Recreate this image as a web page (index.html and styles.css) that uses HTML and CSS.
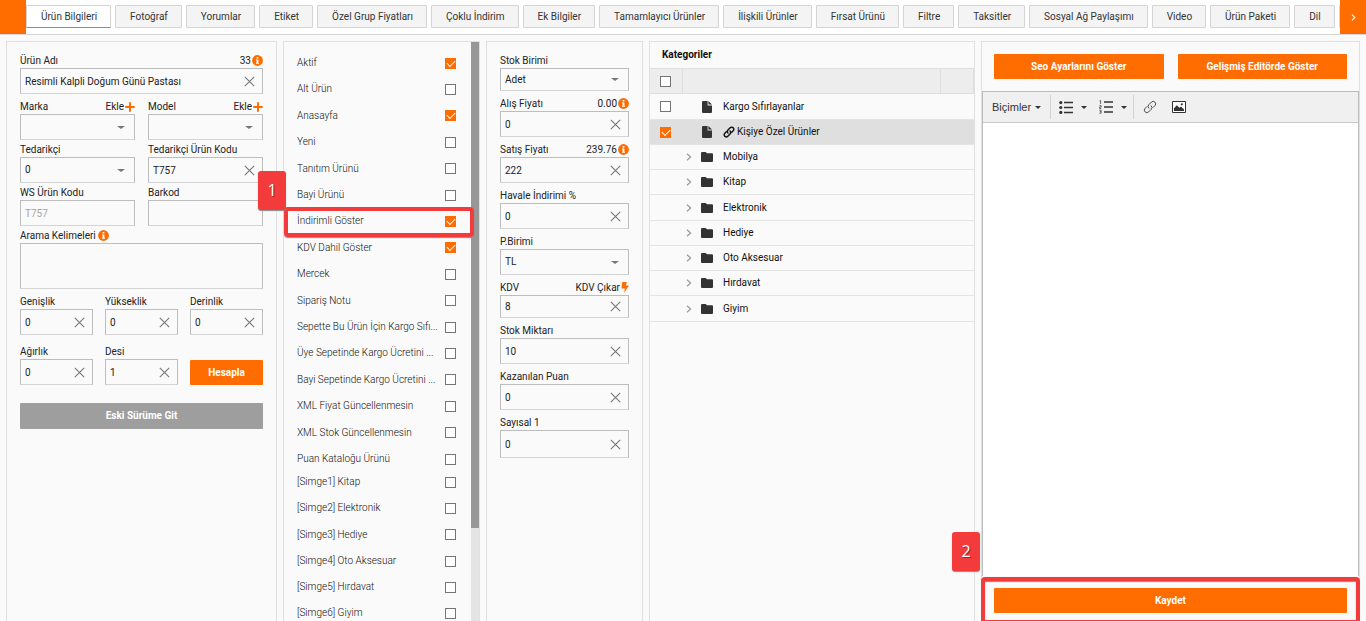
FILE: index.html
```html
<!DOCTYPE html>
<html lang="tr">
<head>
<meta charset="utf-8">
<title>Ürün Bilgileri</title>
<link rel="stylesheet" href="styles.css">
</head>
<body>
<svg class="sprite" width="0" height="0">
  <symbol id="x" viewBox="0 0 11 11"><path d="M.8.8l9.4 9.4M10.2.8L.8 10.2" fill="none" stroke="currentColor" stroke-width="1.1"/></symbol>
  <symbol id="info" viewBox="0 0 11 11"><circle cx="5.5" cy="5.5" r="5.4" fill="#ff6c00"/><path d="M4.6 2h1.8v1.5H4.6zM4 4.5h2.4v3.2H7v1H4v-1h.6V5.4H4z" fill="#fff"/></symbol>
  <symbol id="plus" viewBox="0 0 10 10"><path d="M5 .3v9.4M.3 5h9.4" stroke="#ff6c00" stroke-width="2"/></symbol>
  <symbol id="bolt" viewBox="0 0 8 11"><path d="M1.3 0h4.5L4.9 3.6H8L3 11l1-4.6H.4z" fill="#ff6c00"/></symbol>
  <symbol id="file" viewBox="0 0 10 12"><path d="M1 0h4.6v4.4H10V11a1 1 0 0 1-1 1H1a1 1 0 0 1-1-1V1a1 1 0 0 1 1-1zM6.4 0L10 3.6H6.4z" fill="#333"/></symbol>
  <symbol id="folder" viewBox="0 0 12 10"><path d="M1 0h3.6L6 1.2h5a1 1 0 0 1 1 1V9a1 1 0 0 1-1 1H1a1 1 0 0 1-1-1V1a1 1 0 0 1 1-1z" fill="#333"/></symbol>
  <symbol id="chev" viewBox="0 0 6 8"><path d="M1 .8L4.6 4 1 7.2" fill="none" stroke="#999" stroke-width="1.2"/></symbol>
  <symbol id="chain" viewBox="0 0 16 16"><g fill="none" stroke="currentColor" stroke-linecap="round"><path d="M6.6 9.4a2.8 2.8 0 0 1 0-4l3-3a2.8 2.8 0 0 1 4 4l-2 2"/><path d="M9.4 6.6a2.8 2.8 0 0 1 0 4l-3 3a2.8 2.8 0 0 1-4-4l2-2"/></g></symbol>
</svg>

<nav class="tabbar">
  <button class="tab-scroll tab-scroll-left" aria-label="Geri"></button>
  <div class="tabs">
    <button class="tab active">Ürün Bilgileri</button>
    <button class="tab">Fotoğraf</button>
    <button class="tab">Yorumlar</button>
    <button class="tab">Etiket</button>
    <button class="tab">Özel Grup Fiyatları</button>
    <button class="tab">Çoklu İndirim</button>
    <button class="tab">Ek Bilgiler</button>
    <button class="tab">Tamamlayıcı Ürünler</button>
    <button class="tab">İlişkili Ürünler</button>
    <button class="tab">Fırsat Ürünü</button>
    <button class="tab">Filtre</button>
    <button class="tab">Taksitler</button>
    <button class="tab">Sosyal Ağ Paylaşımı</button>
    <button class="tab">Video</button>
    <button class="tab">Ürün Paketi</button>
    <button class="tab">Dil</button>
    <button class="tab"></button>
  </div>
  <button class="tab-scroll" aria-label="İleri"><svg width="5" height="7" viewBox="0 0 5 7"><path d="M1 .7L3.8 3.5 1 6.3" fill="none" stroke="#fff" stroke-width="1.2"/></svg></button>
</nav>

<main class="columns">
  <section class="panel form">
    <div class="field">
      <div class="label"><label for="ad">Ürün Adı</label><span class="extra">33<svg class="i11"><use href="#info"/></svg></span></div>
      <div class="control"><input id="ad" value="Resimli Kalpli Doğum Günü Pastası"><button class="clear" aria-label="Temizle"><svg><use href="#x"/></svg></button></div>
    </div>
    <div class="stack">
      <div class="two">
        <div class="field">
          <div class="label"><label for="marka">Marka</label><span class="extra">Ekle<svg class="i10"><use href="#plus"/></svg></span></div>
          <div class="control drop"><select id="marka"><option></option></select></div>
        </div>
        <div class="field">
          <div class="label"><label for="model">Model</label><span class="extra">Ekle<svg class="i10"><use href="#plus"/></svg></span></div>
          <div class="control drop"><select id="model"><option></option></select></div>
        </div>
      </div>
      <div class="two">
        <div class="field">
          <div class="label"><label for="ted">Tedarikçi</label></div>
          <div class="control drop"><select id="ted"><option>0</option></select></div>
        </div>
        <div class="field">
          <div class="label"><label for="tedkod">Tedarikçi Ürün Kodu</label></div>
          <div class="control"><input id="tedkod" value="T757"><button class="clear" aria-label="Temizle"><svg><use href="#x"/></svg></button></div>
        </div>
      </div>
      <div class="two">
        <div class="field">
          <div class="label"><label for="ws">WS Ürün Kodu</label></div>
          <div class="control"><input id="ws" value="T757" disabled></div>
        </div>
        <div class="field">
          <div class="label"><label for="barkod">Barkod</label></div>
          <div class="control"><input id="barkod"></div>
        </div>
      </div>
      <div class="field">
        <div class="label start"><label for="arama">Arama Kelimeleri</label><svg class="i11"><use href="#info"/></svg></div>
        <textarea id="arama"></textarea>
      </div>
    </div>
    <div class="three">
      <div class="field">
        <div class="label"><label for="gen">Genişlik</label></div>
        <div class="control"><input id="gen" value="0"><button class="clear" aria-label="Temizle"><svg><use href="#x"/></svg></button></div>
      </div>
      <div class="field">
        <div class="label"><label for="yuk">Yükseklik</label></div>
        <div class="control"><input id="yuk" value="0"><button class="clear" aria-label="Temizle"><svg><use href="#x"/></svg></button></div>
      </div>
      <div class="field">
        <div class="label"><label for="der">Derinlik</label></div>
        <div class="control"><input id="der" value="0"><button class="clear" aria-label="Temizle"><svg><use href="#x"/></svg></button></div>
      </div>
      <div class="field">
        <div class="label"><label for="agir">Ağırlık</label></div>
        <div class="control"><input id="agir" value="0"><button class="clear" aria-label="Temizle"><svg><use href="#x"/></svg></button></div>
      </div>
      <div class="field">
        <div class="label"><label for="desi">Desi</label></div>
        <div class="control"><input id="desi" value="1"><button class="clear" aria-label="Temizle"><svg><use href="#x"/></svg></button></div>
      </div>
      <button class="btn calc">Hesapla</button>
    </div>
    <button class="btn grey">Eski Sürüme Git</button>
  </section>

  <section class="panel flags">
    <div class="flag-lists">
      <div class="flag-list">
        <label class="flag"><span>Aktif</span><input type="checkbox" checked></label>
        <label class="flag"><span>Alt Ürün</span><input type="checkbox"></label>
        <label class="flag"><span>Anasayfa</span><input type="checkbox" checked></label>
        <label class="flag"><span>Yeni</span><input type="checkbox"></label>
        <label class="flag"><span>Tanıtım Ürünü</span><input type="checkbox"></label>
        <label class="flag"><span>Bayi Ürünü</span><input type="checkbox"></label>
        <label class="flag marked"><span>İndirimli Göster</span><input type="checkbox" checked><i class="frame"></i><b class="badge badge-one">1</b></label>
        <label class="flag"><span>KDV Dahil Göster</span><input type="checkbox" checked></label>
        <label class="flag"><span>Mercek</span><input type="checkbox"></label>
        <label class="flag"><span>Sipariş Notu</span><input type="checkbox"></label>
        <label class="flag"><span>Sepette Bu Ürün İçin Kargo Sıfı...</span><input type="checkbox"></label>
        <label class="flag"><span>Üye Sepetinde Kargo Ücretini ...</span><input type="checkbox"></label>
        <label class="flag"><span>Bayi Sepetinde Kargo Ücretini ...</span><input type="checkbox"></label>
        <label class="flag"><span>XML Fiyat Güncellenmesin</span><input type="checkbox"></label>
        <label class="flag"><span>XML Stok Güncellenmesin</span><input type="checkbox"></label>
        <label class="flag"><span>Puan Kataloğu Ürünü</span><input type="checkbox"></label>
      </div>
      <div class="flag-list symbols">
        <label class="flag"><span>[Simge1] Kitap</span><input type="checkbox"></label>
        <label class="flag"><span>[Simge2] Elektronik</span><input type="checkbox"></label>
        <label class="flag"><span>[Simge3] Hediye</span><input type="checkbox"></label>
        <label class="flag"><span>[Simge4] Oto Aksesuar</span><input type="checkbox"></label>
        <label class="flag"><span>[Simge5] Hırdavat</span><input type="checkbox"></label>
        <label class="flag"><span>[Simge6] Giyim</span><input type="checkbox"></label>
      </div>
    </div>
    <div class="scrollbar"><div class="thumb"></div></div>
  </section>

  <section class="panel form prices">
    <div class="field">
      <div class="label"><label for="birim">Stok Birimi</label></div>
      <div class="control drop short"><select id="birim"><option>Adet</option></select></div>
    </div>
    <div class="field">
      <div class="label"><label for="alis">Alış Fiyatı</label><span class="extra">0.00<svg class="i11"><use href="#info"/></svg></span></div>
      <div class="control"><input id="alis" value="0"><button class="clear" aria-label="Temizle"><svg><use href="#x"/></svg></button></div>
    </div>
    <div class="field">
      <div class="label"><label for="satis">Satış Fiyatı</label><span class="extra">239.76<svg class="i11"><use href="#info"/></svg></span></div>
      <div class="control"><input id="satis" value="222"><button class="clear" aria-label="Temizle"><svg><use href="#x"/></svg></button></div>
    </div>
    <div class="field">
      <div class="label"><label for="havale">Havale İndirimi %</label></div>
      <div class="control"><input id="havale" value="0"><button class="clear" aria-label="Temizle"><svg><use href="#x"/></svg></button></div>
    </div>
    <div class="field">
      <div class="label"><label for="para">P.Birimi</label></div>
      <div class="control drop"><select id="para"><option>TL</option></select></div>
    </div>
    <div class="field">
      <div class="label"><label for="kdv">KDV</label><span class="extra">KDV Çıkar<svg class="bolt"><use href="#bolt"/></svg></span></div>
      <div class="control short"><input id="kdv" value="8"><button class="clear" aria-label="Temizle"><svg><use href="#x"/></svg></button></div>
    </div>
    <div class="field">
      <div class="label"><label for="stok">Stok Miktarı</label></div>
      <div class="control"><input id="stok" value="10"><button class="clear" aria-label="Temizle"><svg><use href="#x"/></svg></button></div>
    </div>
    <div class="field">
      <div class="label"><label for="puan">Kazanılan Puan</label></div>
      <div class="control"><input id="puan" value="0"><button class="clear" aria-label="Temizle"><svg><use href="#x"/></svg></button></div>
    </div>
    <div class="field">
      <div class="label"><label for="say">Sayısal 1</label></div>
      <div class="control tall"><input id="say" value="0"><button class="clear" aria-label="Temizle"><svg><use href="#x"/></svg></button></div>
    </div>
  </section>

  <section class="panel">
    <h2 class="cat-title">Kategoriler</h2>
    <table class="cats">
      <thead><tr><th class="pick"><input type="checkbox" aria-label="Tümünü seç"></th><th></th><th class="tail"></th></tr></thead>
      <tbody>
        <tr><td class="pick"><input type="checkbox" aria-label="Kargo Sıfırlayanlar"></td><td colspan="2"><div class="node"><span class="toggle"></span><svg class="file"><use href="#file"/></svg><span>Kargo Sıfırlayanlar</span></div></td></tr>
        <tr class="selected"><td class="pick"><input type="checkbox" checked aria-label="Kişiye Özel Ürünler"></td><td colspan="2"><div class="node"><span class="toggle"></span><svg class="file"><use href="#file"/></svg><svg class="linked"><use href="#chain"/></svg><span>Kişiye Özel Ürünler</span></div></td></tr>
        <tr><td></td><td colspan="2"><div class="node"><svg class="toggle"><use href="#chev"/></svg><svg class="folder"><use href="#folder"/></svg><span>Mobilya</span></div></td></tr>
        <tr><td></td><td colspan="2"><div class="node"><svg class="toggle"><use href="#chev"/></svg><svg class="folder"><use href="#folder"/></svg><span>Kitap</span></div></td></tr>
        <tr><td></td><td colspan="2"><div class="node"><svg class="toggle"><use href="#chev"/></svg><svg class="folder"><use href="#folder"/></svg><span>Elektronik</span></div></td></tr>
        <tr><td></td><td colspan="2"><div class="node"><svg class="toggle"><use href="#chev"/></svg><svg class="folder"><use href="#folder"/></svg><span>Hediye</span></div></td></tr>
        <tr><td></td><td colspan="2"><div class="node"><svg class="toggle"><use href="#chev"/></svg><svg class="folder"><use href="#folder"/></svg><span>Oto Aksesuar</span></div></td></tr>
        <tr><td></td><td colspan="2"><div class="node"><svg class="toggle"><use href="#chev"/></svg><svg class="folder"><use href="#folder"/></svg><span>Hırdavat</span></div></td></tr>
        <tr><td></td><td colspan="2"><div class="node"><svg class="toggle"><use href="#chev"/></svg><svg class="folder"><use href="#folder"/></svg><span>Giyim</span></div></td></tr>
      </tbody>
    </table>
  </section>

  <section class="panel detail">
    <div class="actions">
      <button class="btn">Seo Ayarlarını Göster</button>
      <button class="btn">Gelişmiş Editörde Göster</button>
    </div>
    <div class="editor">
      <div class="toolbar">
        <div class="group"><button class="tool formats">Biçimler<i class="caret"></i></button></div>
        <div class="group lists">
          <button class="tool" aria-label="Liste"><svg width="14" height="13" viewBox="0 0 14 13"><path d="M5 1.5h9M5 6.5h9M5 11.5h9" stroke="#333" stroke-width="1.4"/><g fill="#333"><circle cx="1.8" cy="1.6" r="1.6"/><circle cx="1.8" cy="6.5" r="1.6"/><circle cx="1.8" cy="11.4" r="1.6"/></g></svg><i class="caret"></i></button>
          <button class="tool" aria-label="Numaralı liste"><svg width="14" height="14" viewBox="0 0 14 14"><path d="M5 2h9M5 7h9M5 12h9" stroke="#333" stroke-width="1.3"/><path d="M.6 1l1-.6V4M.4 5.6h1.7v1.5H.6v1.4h1.6M.4 10.2h1.7v3H.4M.8 11.7h1.3" fill="none" stroke="#444" stroke-width=".8"/></svg><i class="caret"></i></button>
        </div>
        <div class="group media">
          <button class="tool" aria-label="Bağlantı"><svg class="i14"><use href="#chain"/></svg></button>
          <button class="tool" aria-label="Resim"><svg width="14" height="12" viewBox="0 0 14 12"><path d="M.5.5h13v11H.5z" fill="#fff" stroke="#333"/><path d="M2 10V7.2l2.8-3 2.6 2.6L9 5.4l3 3V10z" fill="#333"/><circle cx="9.8" cy="3.3" r="1.1" fill="#333"/></svg></button>
        </div>
      </div>
      <textarea class="canvas" aria-label="Açıklama"></textarea>
    </div>
    <div class="footer">
      <button class="btn">Kaydet</button>
      <i class="frame"></i><b class="badge badge-two">2</b>
    </div>
  </section>
</main>
</body>
</html>
```
FILE: styles.css
```css
* { box-sizing: border-box; }
body {
  margin: 0;
  height: 100vh;
  display: flex;
  flex-direction: column;
  overflow: hidden;
  background: #fafafa;
  color: #222;
  font: 10px/16px Roboto, sans-serif;
}
button, input, select, textarea { font: inherit; color: inherit; margin: 0; border-radius: 0; }
button { padding: 0; border: 0; background: none; }
svg { display: block; flex: none; }
.sprite { position: absolute; }

/* Tab bar */
.tabbar { display: flex; flex: none; background: #fff; border-bottom: 1px solid #d6d6d6; }
.tab-scroll { width: 26px; height: 34px; flex: none; background: #ff6c00; display: grid; place-items: center; }
.tabs { flex: 1; min-width: 0; display: flex; gap: 4px; padding: 5px 0 6px; overflow: hidden; }
.tab {
  flex: none;
  min-width: 32px;
  padding: 0 13px 0 14px;
  background: #f4f4f4;
  border: 1px solid #d4d4d4;
  border-radius: 1px;
  color: #333;
}
.tab.active { background: #fff; border-bottom-color: #ff6c00; }

/* Columns */
.columns {
  flex: 1;
  min-height: 0;
  display: grid;
  grid-template-columns: 271fr 197fr 157fr 326fr 379fr;
  gap: 6px;
  padding: 6px 6px 0;
}
.panel { min-width: 0; min-height: 0; border: 1px solid #e0e0e0; border-bottom: 0; }

/* Forms */
.form { padding: 9px 13px 0; display: flex; flex-direction: column; gap: 3px; }
.two, .three { display: grid; grid-template-columns: 1fr 1fr; column-gap: 13px; }
.three { grid-template-columns: 1fr 1fr 1fr; gap: 7px 12px; }
.field { min-width: 0; }
.label { display: flex; justify-content: space-between; align-items: center; height: 17px; padding-top: 2px; white-space: nowrap; }
.label.start { justify-content: flex-start; gap: 2px; }
.extra { display: flex; align-items: center; gap: 1px; }
.i10 { width: 10px; height: 10px; }
.i11 { width: 11px; height: 11px; }
.i14 { width: 14px; height: 14px; }
.bolt { width: 8px; height: 11px; }
.control {
  display: flex;
  align-items: center;
  height: 26px;
  border: 1px solid #bdbdbd;
  border-bottom-color: #d4d4d4;
}
.control.short { height: 23px; }
.control.tall { height: 28px; }
.control input, .control select {
  flex: 1;
  min-width: 0;
  height: 100%;
  padding: 0 4px;
  border: 0;
  background: transparent;
  appearance: none;
  outline: 0;
  font-size: 10px;
}
.control input:disabled { color: #a6a6a6; }
.clear { width: 26px; height: 100%; display: grid; place-items: center; color: #777; }
.clear svg { width: 11px; height: 11px; }
.drop::after, .caret { content: ""; border: 4px solid transparent; border-top: 3px solid #777; border-bottom: 0; }
.drop::after { margin-right: 9px; }
.form textarea {
  display: block;
  width: 100%;
  height: 46px;
  resize: none;
  background: transparent;
  border: 1px solid #bdbdbd;
  border-bottom-color: #d4d4d4;
}
.btn {
  height: 25px;
  border-radius: 1px;
  background: #ff6c00;
  color: #fff;
  font-weight: 700;
}
.btn.calc { align-self: end; }
.btn.grey { height: 26px; margin-top: 15px; background: #9e9e9e; }

/* Tick boxes */
input[type="checkbox"] {
  appearance: none;
  display: grid;
  place-items: center;
  flex: none;
  width: 11px;
  height: 11px;
  border: 1px solid #757575;
  background: #fff;
}
input[type="checkbox"]:checked { background: #ff6c00; border-color: #ff6c00; }
input[type="checkbox"]:checked::after {
  content: "";
  width: 7px;
  height: 4px;
  margin-bottom: 2px;
  border: solid #fff;
  border-width: 0 0 1px 1px;
  transform: rotate(-45deg);
}

/* Flags */
.flags { display: flex; }
.flag-lists { flex: 1; min-width: 0; padding: 8px 15px 0 13px; }
.flag { position: relative; display: flex; justify-content: space-between; align-items: center; height: 26px; color: #111; font-weight: 300; white-space: nowrap; }
.flag:nth-child(5n+3), .flag:nth-child(5n) { height: 27px; }
.symbols { margin-top: -3px; }
.symbols .flag:nth-child(5n) { height: 26px; }
.scrollbar { width: 8px; background: #e4e4e4; }
.thumb { height: 84%; background: #979797; }

/* Numbered call-outs */
.frame {
  position: absolute;
  border: 4px solid #f33b3b;
  border-radius: 4px;
  box-shadow: 0 1px 1px #888;
  pointer-events: none;
}
.badge {
  position: absolute;
  width: 28px;
  height: 39px;
  border-radius: 3px;
  background: #f33b3b;
  box-shadow: 0 1px 1px #888;
  color: #fff;
  font: 400 16px/39px "Open Sans", sans-serif;
  text-align: center;
  text-shadow: 1px 1px 0 #a22;
}
.marked .frame { inset: -1px -18px -3px -13px; }
.badge-one { left: -39px; top: -37px; }
.footer .frame { inset: 1px -1px -3px -1px; box-shadow: inset 0 1px 1px #888; }
.badge-two { left: -30px; top: -44px; }

/* Categories */
.cat-title { margin: 0; padding: 5px 12px; font-size: 10px; line-height: 16px; color: #111; }
.cats { width: 100%; table-layout: fixed; border-collapse: collapse; color: #111; }
.cats th, .cats td { padding: 0; border-bottom: 1px solid #e4e4e4; }
.cats tr { height: 25px; }
.cats tbody tr:nth-child(4n+1) { height: 26px; }
.cats th { background: #ededed; border: 1px solid #dedede; border-left: 0; }
.cats .pick { width: 32px; padding-left: 10px; }
.cats .tail { width: 33px; }
.cats .selected { background: #dfdfdf; }
.node { display: flex; align-items: center; }
.toggle { width: 6px; height: 8px; margin: 0 9px 0 4px; }
.folder, .file { width: 12px; height: 10px; margin-right: 10px; }
.file { height: 12px; }
.linked { width: 12px; height: 12px; margin-right: 2px; stroke-width: 2px; }

/* Description and save */
.detail { display: flex; flex-direction: column; }
.actions { display: grid; grid-template-columns: 1fr 1fr; gap: 14px; padding: 12px; }
.editor { flex: 1; min-height: 0; display: flex; flex-direction: column; border: 1px solid #bdbdbd; border-bottom: 0; }
.toolbar { display: flex; align-items: center; height: 31px; background: #f0f0f0; border-bottom: 1px solid #c8c8c8; }
.group { display: flex; align-items: center; height: 24px; padding: 0 9px; }
.group + .group { border-left: 1px solid #d4d4d4; }
.lists { padding: 0 6px 0 8px; gap: 12px; }
.media { gap: 15px; }
.tool { display: flex; align-items: center; gap: 8px; color: #333; }
.tool.formats { gap: 4px; font: 11px "Liberation Sans", Arial, sans-serif; }
.caret { border-width: 3px; border-bottom: 0; border-top-color: #333; }
.canvas { flex: 1; display: block; border: 0; resize: none; background: #fff; outline: 0; }
.footer { position: relative; padding: 12px 12px 8px; }
.footer .btn { display: block; width: 100%; }
```
